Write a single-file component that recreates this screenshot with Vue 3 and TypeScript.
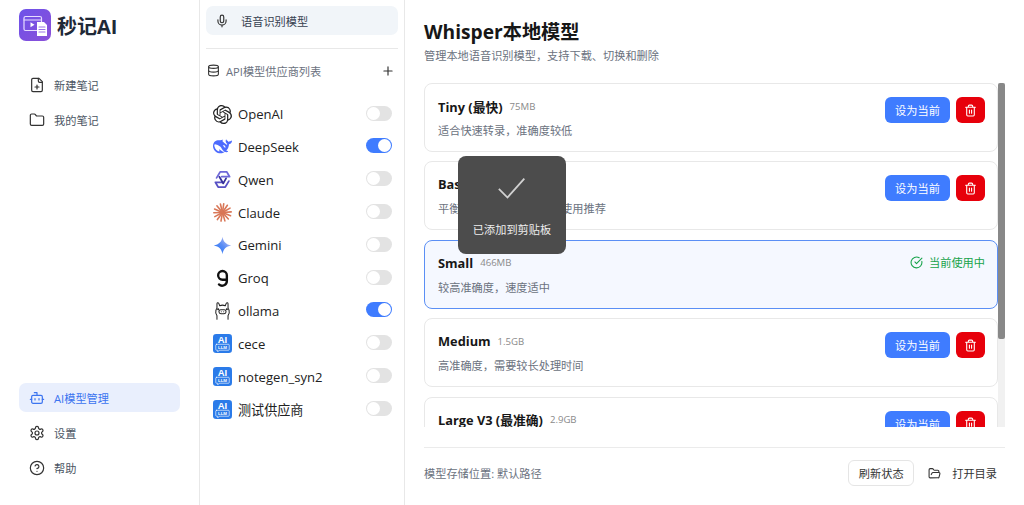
<script setup lang="ts">
interface NavItem { label: string; icon: string; active?: boolean }
interface Provider { name: string; icon: string; on?: boolean }
interface Model { name: string; size: string; desc: string; current?: boolean }

const topNav: NavItem[] = [
  { label: '新建笔记', icon: 'file' },
  { label: '我的笔记', icon: 'folder' },
]
const bottomNav: NavItem[] = [
  { label: 'AI模型管理', icon: 'bot', active: true },
  { label: '设置', icon: 'gear' },
  { label: '帮助', icon: 'help' },
]
const providers: Provider[] = [
  { name: 'OpenAI', icon: 'openai' },
  { name: 'DeepSeek', icon: 'deepseek', on: true },
  { name: 'Qwen', icon: 'qwen' },
  { name: 'Claude', icon: 'claude' },
  { name: 'Gemini', icon: 'gemini' },
  { name: 'Groq', icon: 'groq' },
  { name: 'ollama', icon: 'ollama', on: true },
  { name: 'cece', icon: 'llm' },
  { name: 'notegen_syn2', icon: 'llm' },
  { name: '测试供应商', icon: 'llm' },
]
const models: Model[] = [
  { name: 'Tiny (最快)', size: '75MB', desc: '适合快速转录，准确度较低' },
  { name: 'Base', size: '142MB', desc: '平衡速度和准确度，日常使用推荐' },
  { name: 'Small', size: '466MB', desc: '较高准确度，速度适中', current: true },
  { name: 'Medium', size: '1.5GB', desc: '高准确度，需要较长处理时间' },
  { name: 'Large V3 (最准确)', size: '2.9GB', desc: '最高准确度，需要大量处理时间' },
]
const rays = [0, 26, 52, 78, 104, 130, 156, 182, 208, 234, 260, 286, 312, 338]
</script>

<template>
  <div class="app">
    <aside class="sidebar">
      <div>
        <div class="brand">
          <svg class="logo" viewBox="0 0 32 32">
            <defs>
              <linearGradient id="logoBg" x1="0" y1="0" x2="1" y2="1">
                <stop offset="0" stop-color="#6d52ea" />
                <stop offset="1" stop-color="#8a4fd8" />
              </linearGradient>
            </defs>
            <rect width="32" height="32" rx="7" fill="url(#logoBg)" />
            <rect x="5" y="7.5" width="17.5" height="14" rx="1.5" fill="none" stroke="#e6dcff" stroke-width="1.2" />
            <path d="M5 11h17.5" stroke="#e6dcff" stroke-width="1" />
            <path d="M11.5 13.2v5l4-2.5z" fill="#fff" />
            <path d="M18 13h7l3 3v11h-10z" fill="#fff" />
            <path d="M20 18h6M20 20.5h6M20 23h6" stroke="#9a72e8" stroke-width="1.1" />
          </svg>
          <span class="brand-name">秒记AI</span>
        </div>
        <nav class="nav">
          <a v-for="item in topNav" :key="item.label" class="nav-item">
            <svg class="nav-icon" viewBox="0 0 24 24">
              <template v-if="item.icon === 'file'">
                <path d="M15 2H6a2 2 0 0 0-2 2v16a2 2 0 0 0 2 2h12a2 2 0 0 0 2-2V7z" />
                <path d="M14 2v4a2 2 0 0 0 2 2h4M9 15h6M12 18v-6" />
              </template>
              <path v-else d="M20 20a2 2 0 0 0 2-2V8a2 2 0 0 0-2-2h-7.9a2 2 0 0 1-1.69-.9L9.6 3.9A2 2 0 0 0 7.93 3H4a2 2 0 0 0-2 2v13a2 2 0 0 0 2 2Z" />
            </svg>
            {{ item.label }}
          </a>
        </nav>
      </div>
      <nav class="nav">
        <a v-for="item in bottomNav" :key="item.label" class="nav-item" :class="{ active: item.active }">
          <svg class="nav-icon" viewBox="0 0 24 24">
            <template v-if="item.icon === 'bot'">
              <path d="M12 8V4H8" />
              <rect x="4" y="8" width="16" height="12" rx="2" />
              <path d="M2 14h2M20 14h2M15 13v2M9 13v2" />
            </template>
            <template v-else-if="item.icon === 'gear'">
              <path d="M12.22 2h-.44a2 2 0 0 0-2 2v.18a2 2 0 0 1-1 1.73l-.43.25a2 2 0 0 1-2 0l-.15-.08a2 2 0 0 0-2.73.73l-.22.38a2 2 0 0 0 .73 2.73l.15.1a2 2 0 0 1 1 1.72v.51a2 2 0 0 1-1 1.74l-.15.09a2 2 0 0 0-.73 2.73l.22.38a2 2 0 0 0 2.73.73l.15-.08a2 2 0 0 1 2 0l.43.25a2 2 0 0 1 1 1.73V20a2 2 0 0 0 2 2h.44a2 2 0 0 0 2-2v-.18a2 2 0 0 1 1-1.73l.43-.25a2 2 0 0 1 2 0l.15.08a2 2 0 0 0 2.73-.73l.22-.39a2 2 0 0 0-.73-2.73l-.15-.08a2 2 0 0 1-1-1.74v-.5a2 2 0 0 1 1-1.74l.15-.09a2 2 0 0 0 .73-2.73l-.22-.38a2 2 0 0 0-2.73-.73l-.15.08a2 2 0 0 1-2 0l-.43-.25a2 2 0 0 1-1-1.73V4a2 2 0 0 0-2-2z" />
              <circle cx="12" cy="12" r="3" />
            </template>
            <template v-else>
              <circle cx="12" cy="12" r="10" />
              <path d="M9.09 9a3 3 0 0 1 5.83 1c0 2-3 3-3 3M12 17h.01" />
            </template>
          </svg>
          {{ item.label }}
        </a>
      </nav>
    </aside>

    <section class="providers">
      <div class="speech-tab">
        <svg class="tab-icon" viewBox="0 0 24 24">
          <path d="M12 2a3 3 0 0 0-3 3v7a3 3 0 0 0 6 0V5a3 3 0 0 0-3-3Z" />
          <path d="M19 10v2a7 7 0 0 1-14 0v-2M12 19v3" />
        </svg>
        语音识别模型
      </div>
      <div class="rule"></div>
      <div class="list-head">
        <svg class="db-icon" viewBox="0 0 24 24">
          <ellipse cx="12" cy="5" rx="9" ry="3" />
          <path d="M3 5v14a9 3 0 0 0 18 0V5" />
          <path d="M3 12a9 3 0 0 0 18 0" />
        </svg>
        <span class="list-title">API模型供应商列表</span>
        <svg class="plus-icon" viewBox="0 0 24 24"><path d="M5 12h14M12 5v14" /></svg>
      </div>
      <ul class="provider-list">
        <li v-for="p in providers" :key="p.name" class="provider">
          <svg class="brand-icon" viewBox="0 0 24 24">
            <path v-if="p.icon === 'openai'" fill="#222" d="M22.28 9.82a5.98 5.98 0 0 0-.52-4.91 6.05 6.05 0 0 0-6.51-2.9A6.07 6.07 0 0 0 4.98 4.18a5.98 5.98 0 0 0-4 2.9 6.05 6.05 0 0 0 .74 7.1 5.98 5.98 0 0 0 .51 4.91 6.05 6.05 0 0 0 6.51 2.9A5.98 5.98 0 0 0 13.26 24a6.06 6.06 0 0 0 5.77-4.21 5.99 5.99 0 0 0 4-2.9 6.06 6.06 0 0 0-.75-7.07zM13.26 22.43a4.48 4.48 0 0 1-2.88-1.04l.14-.08 4.78-2.76a.79.79 0 0 0 .39-.68v-6.74l2.02 1.17a.07.07 0 0 1 .04.05v5.58a4.5 4.5 0 0 1-4.49 4.5zM3.6 18.3a4.47 4.47 0 0 1-.53-3.01l.14.08 4.78 2.76a.77.77 0 0 0 .78 0l5.84-3.37v2.33a.08.08 0 0 1-.03.06L9.74 19.95a4.5 4.5 0 0 1-6.14-1.65zM2.34 7.9a4.49 4.49 0 0 1 2.37-1.97V11.6a.77.77 0 0 0 .39.68l5.81 3.35-2.02 1.17a.08.08 0 0 1-.07 0l-4.83-2.79A4.5 4.5 0 0 1 2.34 7.87zm16.6 3.86L13.1 8.36 15.12 7.2a.08.08 0 0 1 .07 0l4.83 2.79a4.49 4.49 0 0 1-.68 8.1v-5.68a.79.79 0 0 0-.4-.66zm2.01-3.02l-.14-.09-4.77-2.78a.78.78 0 0 0-.79 0L9.41 9.23V6.9a.07.07 0 0 1 .03-.06l4.83-2.79a4.5 4.5 0 0 1 6.68 4.66zM8.31 12.86l-2.02-1.16a.08.08 0 0 1-.04-.06V6.07a4.5 4.5 0 0 1 7.37-3.45l-.14.08-4.78 2.76a.79.79 0 0 0-.39.68zm1.1-2.37l2.6-1.5 2.6 1.5v3l-2.6 1.5-2.6-1.5z" />
            <path v-else-if="p.icon === 'deepseek'" fill="#4d6bfe" d="M23.748 4.482c-.254-.124-.364.113-.512.234-.051.039-.094.09-.137.136-.372.397-.806.657-1.373.626-.829-.046-1.537.214-2.163.848-.133-.782-.575-1.248-1.247-1.548-.352-.156-.708-.311-.955-.65-.172-.241-.219-.51-.305-.774-.055-.16-.11-.323-.293-.35-.2-.031-.278.136-.356.276-.313.572-.434 1.202-.422 1.84.027 1.436.633 2.58 1.838 3.393.137.093.172.187.129.323-.082.28-.18.552-.266.833-.055.179-.137.217-.329.14a5.526 5.526 0 01-1.736-1.18c-.857-.828-1.631-1.742-2.597-2.458a11.365 11.365 0 00-.689-.471c-.985-.957.13-1.743.388-1.836.27-.098.093-.432-.779-.428-.872.004-1.67.295-2.687.684a3.055 3.055 0 01-.465.137 9.597 9.597 0 00-2.883-.102c-1.885.21-3.39 1.102-4.497 2.623C.082 8.606-.231 10.684.152 12.85c.403 2.284 1.569 4.175 3.36 5.653 1.858 1.533 3.997 2.284 6.438 2.14 1.482-.085 3.133-.284 4.994-1.86.47.234.962.327 1.78.397.63.059 1.236-.03 1.705-.128.735-.156.684-.837.419-.961-2.155-1.004-1.682-.595-2.113-.926 1.096-1.296 2.746-2.642 3.392-7.003.05-.347.007-.565 0-.845-.004-.17.035-.237.23-.256a4.173 4.173 0 001.545-.475c1.396-.763 1.96-2.015 2.093-3.517.02-.23-.004-.467-.247-.588zM11.581 18c-2.089-1.642-3.102-2.183-3.52-2.16-.392.024-.321.471-.235.763.09.288.207.486.371.739.114.167.192.416-.113.603-.673.416-1.842-.14-1.897-.167-1.361-.802-2.5-1.86-3.301-3.307-.774-1.393-1.224-2.887-1.298-4.482-.02-.386.093-.522.477-.592a4.696 4.696 0 011.529-.039c2.132.312 3.946 1.265 5.468 2.774.868.86 1.525 1.887 2.202 2.891.72 1.066 1.494 2.082 2.48 2.914.348.292.625.514.891.677-.802.09-2.14.11-3.054-.614zm1-6.44a.306.306 0 01.415-.287.302.302 0 01.2.288.306.306 0 01-.31.307.303.303 0 01-.304-.308zm3.11 1.596c-.2.081-.399.151-.59.16a1.245 1.245 0 01-.798-.254c-.274-.23-.47-.358-.552-.758a1.73 1.73 0 01.016-.588c.07-.327-.008-.537-.239-.727-.187-.156-.426-.199-.688-.199a.559.559 0 01-.254-.078c-.11-.054-.2-.19-.114-.358.028-.054.16-.186.192-.21.356-.202.767-.136 1.146.016.352.144.618.408 1.001.782.391.451.462.576.685.914.176.265.336.537.445.848.067.195-.019.354-.25.452z" />
            <g v-else-if="p.icon === 'qwen'" fill="none" stroke-width="2.200" stroke-linejoin="round">
              <path d="M4.500 10 9 2.500h8.500L21 8.500H11" stroke="#6f68d8" />
              <path d="M20 14l-4.500 7.500H6.500L3 15.500h9.500" stroke="#5750c4" />
              <path d="M8 8.500 13 17l3.500-6.500" stroke="#35309a" />
            </g>
            <g v-else-if="p.icon === 'claude'" stroke="#d97757" stroke-width="2" stroke-linecap="round">
              <path v-for="r in rays" :key="r" d="M12 12V1" :transform="`rotate(${r + 8} 12 12)`" />
            </g>
            <template v-else-if="p.icon === 'gemini'">
              <defs>
                <linearGradient id="gem" x1="0" y1="1" x2="1" y2="0">
                  <stop offset="0" stop-color="#1a6cf5" />
                  <stop offset=".5" stop-color="#5a8df5" />
                  <stop offset="1" stop-color="#d9cdf0" />
                </linearGradient>
              </defs>
              <path fill="url(#gem)" d="M12 1c.8 6 4.500 10 11 11-6.500 1-10.200 5-11 11-.8-6-4.500-10-11-11 6.500-1 10.200-5 11-11z" />
            </template>
            <g v-else-if="p.icon === 'groq'" fill="none" stroke="#111" stroke-width="3">
              <path d="M16.500 13.500H12a5.500 5.500 0 1 1 5.500-5.500v7a6 6 0 0 1-10 4.500" />
            </g>
            <g v-else-if="p.icon === 'ollama'" fill="none" stroke="#222" stroke-width="1.300" stroke-linejoin="round" stroke-linecap="round">
              <path d="M5 23v-4.500c-1.500-1.800-2-4.200-1.300-6.500.2-1.200.6-2 1.300-2.700L5 3.500c0-1.500 1.500-2 2.300-.5L8.500 6c2.200-1 4.800-1 7 0L16.700 3c.8-1.500 2.300-1 2.300.5l0 5.800c.7.700 1.100 1.500 1.300 2.700.7 2.300.2 4.700-1.300 6.500V23" />
              <rect x="7.500" y="11" width="9" height="5" rx="2.500" />
              <path d="M10.500 13.500h.01M13.500 13.500h.01" />
              <circle cx="6.500" cy="10.500" r=".6" fill="#222" />
              <circle cx="17.500" cy="10.500" r=".6" fill="#222" />
            </g>
            <template v-else>
              <rect width="24" height="24" rx="4" fill="#2b7be9" />
              <text x="12" y="11.500" text-anchor="middle" class="llm-ai">AI</text>
              <path d="M4.500 13h15a1 1 0 0 1 1 1v5.500a1 1 0 0 1-1 1H8l-2 2v-2H4.500a1 1 0 0 1-1-1V14a1 1 0 0 1 1-1z" fill="none" stroke="#fff" stroke-width=".8" />
              <text x="12" y="19" text-anchor="middle" class="llm-sub">LLM</text>
            </template>
          </svg>
          <span class="provider-name">{{ p.name }}</span>
          <span class="toggle" :class="{ on: p.on }"><i></i></span>
        </li>
      </ul>
    </section>

    <main class="main">
      <h1>Whisper本地模型</h1>
      <p class="sub">管理本地语音识别模型，支持下载、切换和删除</p>
      <div class="list-wrap">
        <div class="model-list">
          <div v-for="m in models" :key="m.name" class="card" :class="{ current: m.current }">
            <div class="card-text">
              <div class="card-title"><b>{{ m.name }}</b><span>{{ m.size }}</span></div>
              <p>{{ m.desc }}</p>
            </div>
            <div v-if="m.current" class="in-use">
              <svg viewBox="0 0 24 24">
                <path d="M21.800 10A10 10 0 1 1 17 3.300" />
                <path d="m9 11 3 3L22 4" />
              </svg>
              当前使用中
            </div>
            <div v-else class="actions">
              <button class="btn-set">设为当前</button>
              <button class="btn-del">
                <svg viewBox="0 0 24 24">
                  <path d="M3 6h18M19 6v14a2 2 0 0 1-2 2H7a2 2 0 0 1-2-2V6M8 6V4a2 2 0 0 1 2-2h4a2 2 0 0 1 2 2v2M10 11v6M14 11v6" />
                </svg>
              </button>
            </div>
          </div>
        </div>
        <div class="scroll-track"><div class="scroll-thumb"></div></div>
      </div>
      <footer class="foot">
        <span class="path">模型存储位置: 默认路径</span>
        <div class="foot-btns">
          <button class="btn-refresh">刷新状态</button>
          <button class="btn-open">
            <svg viewBox="0 0 24 24">
              <path d="m6 14 1.500-2.900A2 2 0 0 1 9.240 10H20a2 2 0 0 1 1.940 2.500l-1.540 6a2 2 0 0 1-1.950 1.500H4a2 2 0 0 1-2-2V5a2 2 0 0 1 2-2h3.900a2 2 0 0 1 1.690.9l.81 1.200a2 2 0 0 0 1.670.9H18a2 2 0 0 1 2 2v2" />
            </svg>
            打开目录
          </button>
        </div>
      </footer>
      <div class="toast">
        <svg viewBox="0 0 36 28"><path d="M2 14.500 12.500 25 33 2" /></svg>
        <span>已添加到剪贴板</span>
      </div>
    </main>
  </div>
</template>

<style scoped>
.app {
  display: flex;
  height: 505px;
  overflow: hidden;
  background: #fff;
  color: #1f2937;
  font-family: "Open Sans", "Noto Sans CJK SC", sans-serif;
}
svg {
  fill: none;
  stroke: currentColor;
  stroke-width: 2;
  stroke-linecap: round;
  stroke-linejoin: round;
  flex-shrink: 0;
}
.brand-icon, .logo {
  stroke: none;
}

.sidebar {
  width: 200px;
  box-sizing: border-box;
  border-right: 1px solid #e8e8e8;
  padding: 9px 19px 23px;
  display: flex;
  flex-direction: column;
  justify-content: space-between;
}
.brand {
  display: flex;
  align-items: center;
  gap: 6px;
  margin-bottom: 29px;
}
.logo {
  width: 32px;
  height: 32px;
}
.brand-name {
  font-size: 20px;
  font-weight: 700;
  color: #1f2937;
}
.nav {
  display: flex;
  flex-direction: column;
  gap: 6px;
}
.nav-item {
  display: flex;
  align-items: center;
  gap: 9px;
  height: 29px;
  padding: 0 10px;
  border-radius: 7px;
  font-size: 11.2px;
  color: #4b5563;
}
.nav-icon {
  width: 16px;
  height: 16px;
  color: #333;
  stroke-width: 1.800;
}
.nav-item.active {
  background: #e9effd;
  color: #3b74f0;
}
.nav-item.active .nav-icon {
  color: #3b74f0;
}

.providers {
  width: 205px;
  box-sizing: border-box;
  border-right: 1px solid #e8e8e8;
  padding: 6px 6px 0;
}
.speech-tab {
  display: flex;
  align-items: center;
  gap: 12px;
  height: 29px;
  padding: 0 9px;
  background: #f1f5f9;
  border-radius: 7px;
  font-size: 11.2px;
  color: #374151;
}
.tab-icon {
  width: 14px;
  height: 14px;
  color: #333;
}
.rule {
  height: 1px;
  background: #e8e8e8;
  margin-top: 13px;
}
.list-head {
  display: flex;
  align-items: center;
  margin-top: 13px;
  height: 17px;
  font-size: 11.2px;
  color: #6b7280;
}
.db-icon {
  width: 13px;
  height: 13px;
  color: #333;
  margin-left: 1px;
  margin-right: 6px;
}
.list-title {
  flex: 1;
}
.plus-icon {
  width: 14px;
  height: 14px;
  color: #333;
  margin-right: 3px;
}
.provider-list {
  list-style: none;
  margin: 18.800px 0 0;
  padding: 0 6px 0 7px;
}
.provider {
  display: flex;
  align-items: center;
  height: 32.800px;
}
.brand-icon {
  width: 19px;
  height: 19px;
  margin-right: 6px;
}
.provider-name {
  flex: 1;
  font-size: 13.1px;
  color: #222;
}
.toggle {
  width: 26px;
  height: 15px;
  margin-bottom: 2px;
  border-radius: 8px;
  background: #e3e3e3;
  display: flex;
  align-items: center;
  padding: 1px;
  box-sizing: border-box;
}
.toggle i {
  width: 13px;
  height: 13px;
  border-radius: 50%;
  background: #fff;
}
.toggle.on {
  background: #3f7cff;
  justify-content: flex-end;
}
.llm-ai {
  font-family: "Liberation Sans", sans-serif;
  font-size: 12px;
  font-weight: 700;
  fill: #fff;
}
.llm-sub {
  font-family: "Liberation Sans", sans-serif;
  font-size: 5.500px;
  font-weight: 700;
  fill: #fff;
}

.main {
  flex: 1;
  min-width: 0;
  position: relative;
  padding: 0 19px;
  display: flex;
  flex-direction: column;
}
h1 {
  margin: 18px 0 0;
  font-size: 19.2px;
  line-height: 27px;
  font-weight: 700;
  color: #171717;
}
.sub {
  margin: 3px 0 0;
  font-size: 11.2px;
  line-height: 16px;
  color: #6b7280;
}
.list-wrap {
  display: flex;
  height: 344px;
  margin-top: 19px;
  overflow: hidden;
}
.model-list {
  flex: 1;
  min-width: 0;
  display: flex;
  flex-direction: column;
  gap: 9.600px;
}
.scroll-track {
  width: 7px;
  background: #f1f1f1;
  flex-shrink: 0;
}
.scroll-thumb {
  height: 256px;
  background: #888;
  border-radius: 2px;
}
.card {
  flex-shrink: 0;
  height: 68.800px;
  box-sizing: border-box;
  border: 1px solid #e8e8e8;
  border-radius: 8px;
  padding: 13px 12px 0 13px;
  display: flex;
  justify-content: space-between;
  align-items: flex-start;
}
.card.current {
  border-color: #5b8ff5;
  background: #f5f8ff;
}
.card-text {
  margin-top: -1px;
}
.card-title {
  display: flex;
  align-items: center;
  gap: 7px;
  height: 20px;
}
.card-title b {
  font-size: 12.8px;
  font-weight: 700;
  color: #171717;
}
.card-title span {
  font-size: 9.6px;
  color: #8a8a8a;
}
.card-text p {
  margin: 7px 0 0;
  font-size: 11.2px;
  line-height: 16px;
  color: #6b7280;
}
.actions {
  display: flex;
  gap: 6px;
}
button {
  font-family: inherit;
  border: none;
  cursor: pointer;
}
.btn-set {
  width: 65px;
  height: 26px;
  border-radius: 6px;
  background: #3f7cff;
  color: #fff;
  font-size: 11.2px;
  padding: 0;
}
.btn-del {
  width: 29px;
  height: 26px;
  border-radius: 6px;
  background: #e7000b;
  color: #fff;
  padding: 0;
  display: flex;
  align-items: center;
  justify-content: center;
}
.btn-del svg {
  width: 13px;
  height: 13px;
}
.in-use {
  display: flex;
  align-items: center;
  gap: 6px;
  height: 17px;
  font-size: 11.2px;
  color: #16a34a;
}
.in-use svg {
  width: 13px;
  height: 13px;
}
.foot {
  margin-top: 20px;
  border-top: 1px solid #ebebeb;
  padding-top: 12px;
  display: flex;
  justify-content: space-between;
  align-items: center;
}
.path {
  font-size: 11.2px;
  color: #6b7280;
}
.foot-btns {
  display: flex;
  align-items: center;
  gap: 14px;
}
.btn-refresh {
  width: 66px;
  height: 26px;
  background: #fff;
  border: 1px solid #e5e5e5;
  border-radius: 6px;
  font-size: 11.2px;
  color: #333;
  padding: 0;
}
.btn-open {
  display: flex;
  align-items: center;
  gap: 11px;
  background: none;
  font-size: 11.2px;
  color: #333;
  padding: 0 8px 0 0;
}
.btn-open svg {
  width: 13px;
  height: 13px;
}
.toast {
  position: absolute;
  left: 53px;
  top: 156px;
  width: 108px;
  height: 98px;
  border-radius: 8px;
  background: #4c4c4c;
  color: #eee;
  display: flex;
  flex-direction: column;
  align-items: center;
}
.toast svg {
  width: 30px;
  height: 23px;
  margin-top: 21px;
  color: #d0d0d0;
  stroke-linecap: butt;
  stroke-linejoin: miter;
  stroke-width: 2.200;
}
.toast span {
  margin-top: 21px;
  font-size: 11.2px;
}
</style>

<style>
html, body {
  margin: 0;
  background: #fff;
}
</style>
